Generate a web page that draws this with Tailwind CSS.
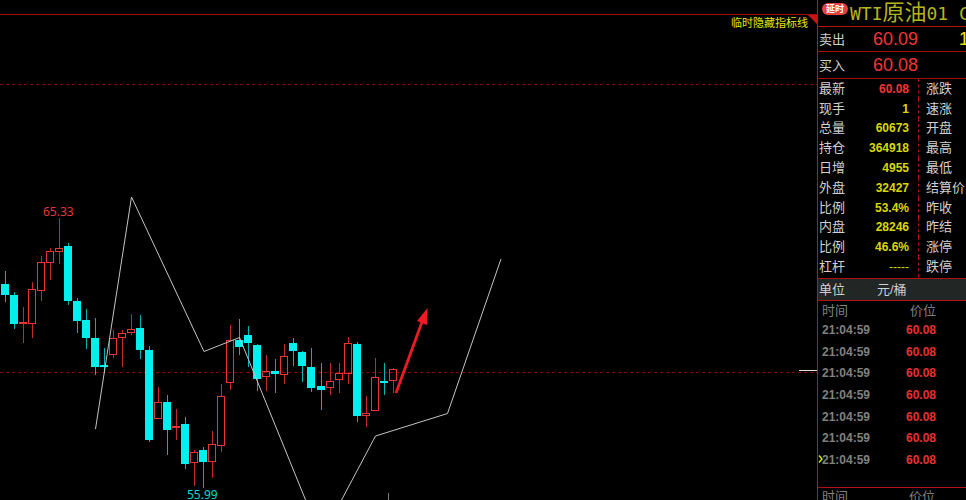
<!DOCTYPE html>
<html lang="zh-CN">
<head>
    <meta charset="UTF-8">
    <meta name="viewport" content="width=device-width, initial-scale=1.0">
    <title>WTI原油01</title>
    <script src="https://cdn.jsdelivr.net/npm/@tailwindcss/browser@4"></script>
</head>
<body class="bg-black text-[#d0d0d0] font-['Liberation_Sans','Noto_Sans_CJK_SC',sans-serif]">
    <div class="flex h-screen overflow-hidden">
        <!-- K线图 -->
        <main class="relative flex-1 min-w-0">
            <svg class="block w-full h-full" role="img" aria-label="WTI原油01 K线图">
                <line x1="0" y1="14.5" x2="100%" y2="14.5" stroke="#a01010" />
                <line x1="0" y1="84.5" x2="100%" y2="84.5" stroke="#8c0000" stroke-dasharray="3 3" />
                <line x1="0" y1="372.5" x2="100%" y2="372.5" stroke="#8c0000" stroke-dasharray="3 3" />
                <g id="candles" shape-rendering="crispEdges"></g>
                <!-- 走势折线 -->
                <g fill="none" stroke="#c4c4c4" stroke-width="1">
                    <polyline points="95.5,429 131.5,197 204,351.5 239.5,337.5 306,501" />
                    <polyline points="341,501 375.5,436 447.5,413.5 501,259" />
                    <line x1="388.5" y1="493" x2="388.5" y2="500" stroke="#808080" />
                </g>
                <!-- 上涨箭头 -->
                <line x1="396" y1="393" x2="422" y2="322" stroke="#ed1c24" stroke-width="2.8" />
                <polygon points="427.5,308 417,321 427,325" fill="#ed1c24" />
                <g class="font-['Noto_Sans',sans-serif] text-[12px]">
                    <text x="43" y="216" fill="#e83535">65.33</text>
                    <text x="187" y="499" fill="#00d8d8">55.99</text>
                </g>
            </svg>
            <button type="button" class="absolute top-[15px] right-[9px] text-[11px] leading-4 text-[#e6e600]">临时隐藏指标线</button>
            <svg class="absolute top-[15px] right-0 w-[9px] h-[9px]" viewBox="0 0 9 9"><path d="M0 0h9v9z" fill="#c81414" /></svg>
            <div class="absolute top-[370px] right-0 w-[18px] h-px bg-[#e0e0e0]"></div>
        </main>

        <!-- 报价面板 -->
        <aside class="w-[149px] shrink-0 overflow-hidden border-l border-[#c01414] text-[13px] whitespace-nowrap">
            <header class="flex items-start h-[27px] pl-1 border-b border-[#b01010]">
                <span class="shrink-0 mt-[3px] w-[26px] h-3 rounded-full bg-[#e84040] text-white text-[9px] leading-3 font-bold text-center">延时</span>
                <h1 class="ml-[2px] text-[18px] leading-[26px] text-[#b4b41e] font-['DejaVu_Sans_Mono','Noto_Sans_CJK_SC',monospace]">WTI<span class="text-[22px]">原油</span>01 C</h1>
            </header>

            <div class="flex items-center h-[25px] pl-px pt-px border-b border-[#a01010]">
                <span class="shrink-0 w-[54px]">卖出</span>
                <span class="shrink-0 w-[86px] text-[18px] text-[#f23535]">60.09</span>
                <span class="text-[18px] text-[#e6e600]">1</span>
            </div>
            <div class="flex items-center h-[27px] pl-px pt-px border-b border-[#a01010]">
                <span class="shrink-0 w-[54px]">买入</span>
                <span class="text-[18px] text-[#f23535]">60.08</span>
            </div>

            <div class="flex h-[199px]">
                <table class="w-[101px] h-[198px] shrink-0 border-r border-dashed border-[#b01414] leading-4">
                    <tbody>
                        <tr><th class="pl-px text-left font-normal">最新</th><td class="pr-[9px] text-right text-[12px] font-bold text-[#f23535]">60.08</td></tr>
                        <tr><th class="pl-px text-left font-normal">现手</th><td class="pr-[9px] text-right text-[12px] font-bold text-[#d8d800]">1</td></tr>
                        <tr><th class="pl-px text-left font-normal">总量</th><td class="pr-[9px] text-right text-[12px] font-bold text-[#d8d800]">60673</td></tr>
                        <tr><th class="pl-px text-left font-normal">持仓</th><td class="pr-[9px] text-right text-[12px] font-bold text-[#d8d800]">364918</td></tr>
                        <tr><th class="pl-px text-left font-normal">日增</th><td class="pr-[9px] text-right text-[12px] font-bold text-[#d8d800]">4955</td></tr>
                        <tr><th class="pl-px text-left font-normal">外盘</th><td class="pr-[9px] text-right text-[12px] font-bold text-[#d8d800]">32427</td></tr>
                        <tr><th class="pl-px text-left font-normal">比例</th><td class="pr-[9px] text-right text-[12px] font-bold text-[#d8d800]">53.4%</td></tr>
                        <tr><th class="pl-px text-left font-normal">内盘</th><td class="pr-[9px] text-right text-[12px] font-bold text-[#d8d800]">28246</td></tr>
                        <tr><th class="pl-px text-left font-normal">比例</th><td class="pr-[9px] text-right text-[12px] font-bold text-[#d8d800]">46.6%</td></tr>
                        <tr><th class="pl-px text-left font-normal">杠杆</th><td class="pr-[9px] text-right text-[12px] text-[#d8d800]">-----</td></tr>
                    </tbody>
                </table>
                <ul class="flex flex-col justify-around h-[198px] pl-[7px] leading-4">
                    <li>涨跌</li>
                    <li>速涨</li>
                    <li>开盘</li>
                    <li>最高</li>
                    <li>最低</li>
                    <li>结算价</li>
                    <li>昨收</li>
                    <li>昨结</li>
                    <li>涨停</li>
                    <li>跌停</li>
                </ul>
            </div>

            <div class="flex items-center h-[23px] pl-px bg-[#222624] border-y border-[#b01010]">
                <span class="w-[58px]">单位</span>
                <span>元/桶</span>
            </div>

            <!-- 成交明细 -->
            <table class="mt-[2px] h-[168px] w-[118px] leading-4">
                <thead>
                    <tr class="text-[#808080]"><th class="pl-1 text-left font-normal">时间</th><th class="text-right font-normal">价位</th></tr>
                </thead>
                <tbody class="text-[12px] font-bold text-[#808080]">
                    <tr><td class="pl-1">21:04:59</td><td class="text-right text-[#e83030]">60.08</td></tr>
                    <tr><td class="pl-1">21:04:59</td><td class="text-right text-[#e83030]">60.08</td></tr>
                    <tr><td class="pl-1">21:04:59</td><td class="text-right text-[#e83030]">60.08</td></tr>
                    <tr><td class="pl-1">21:04:59</td><td class="text-right text-[#e83030]">60.08</td></tr>
                    <tr><td class="pl-1">21:04:59</td><td class="text-right text-[#e83030]">60.08</td></tr>
                    <tr><td class="pl-1">21:04:59</td><td class="text-right text-[#e83030]">60.08</td></tr>
                    <tr>
                        <td class="relative pl-1">
                            <svg class="absolute left-0 top-[6px] w-[5px] h-2" viewBox="0 0 5 8"><path d="M1 .5 4 4 1 7.5" fill="none" stroke="#e6e600" stroke-width="1.4" /></svg>
                            21:04:59
                        </td>
                        <td class="text-right text-[#e83030]">60.08</td>
                    </tr>
                </tbody>
            </table>
            <div class="flex justify-between mt-4 pt-px pl-1 pr-[31px] border-t border-[#b01010] text-[#808080] leading-4">
                <span>时间</span>
                <span>价位</span>
            </div>
        </aside>
    </div>

    <script>
        // [最高, 实体上沿, 实体下沿, 最低, 是否上涨]
        const data = [
            [271, 284, 295, 302, 0], [292, 295, 324, 329, 0], [307, 322, 324, 343, 1], [282, 289, 324, 338, 1],
            [256, 262, 291, 301, 1], [248, 251, 263, 280, 1], [218, 248, 252, 264, 1], [243, 246, 301, 305, 0],
            [298, 301, 321, 333, 0], [309, 320, 338, 349, 0], [318, 338, 367, 375, 0], [348, 365, 367, 373, 0],
            [330, 338, 355, 358, 1], [330, 333, 338, 367, 1], [314, 329, 333, 335, 1], [315, 328, 350, 359, 0],
            [346, 350, 440, 442, 0], [387, 402, 419, 419, 1], [395, 402, 430, 455, 0], [409, 426, 428, 440, 1],
            [417, 424, 464, 469, 0], [450, 452, 463, 486, 1], [447, 450, 462, 488, 0], [431, 444, 462, 478, 1],
            [384, 396, 446, 452, 1], [325, 340, 383, 390, 1], [319, 340, 347, 355, 0], [326, 335, 343, 367, 0],
            [344, 345, 379, 391, 0], [355, 371, 377, 391, 1], [359, 371, 374, 393, 0], [344, 356, 375, 384, 1],
            [338, 343, 351, 366, 0], [351, 352, 366, 382, 0], [348, 367, 388, 392, 0], [363, 386, 390, 410, 0],
            [363, 381, 388, 395, 1], [363, 373, 380, 393, 1], [337, 343, 374, 384, 1], [342, 344, 416, 422, 0],
            [396, 413, 416, 427, 1], [358, 377, 411, 411, 1], [363, 381, 383, 395, 0], [368, 369, 381, 393, 1]
        ];
        const step = 9.02;
        let svg = '';
        data.forEach(([high, top, bottom, low, up], i) => {
            const x = Math.round(4.8 + i * step);
            const wick = up ? '#c02c2c' : '#00b4b4';
            svg += `<path d="M${x + 0.5} ${high}V${top}M${x + 0.5} ${bottom}V${low}" stroke="${wick}"/>`;
            if (up) {
                svg += `<rect x="${x - 3.5}" y="${top + 0.5}" width="7" height="${bottom - top - 1}" fill="none" stroke="#e83535"/>`;
            } else {
                svg += `<rect x="${x - 4}" y="${top}" width="8" height="${bottom - top}" fill="#00f0f0"/>`;
            }
        });
        document.getElementById('candles').innerHTML = svg;
    </script>
</body>
</html>
